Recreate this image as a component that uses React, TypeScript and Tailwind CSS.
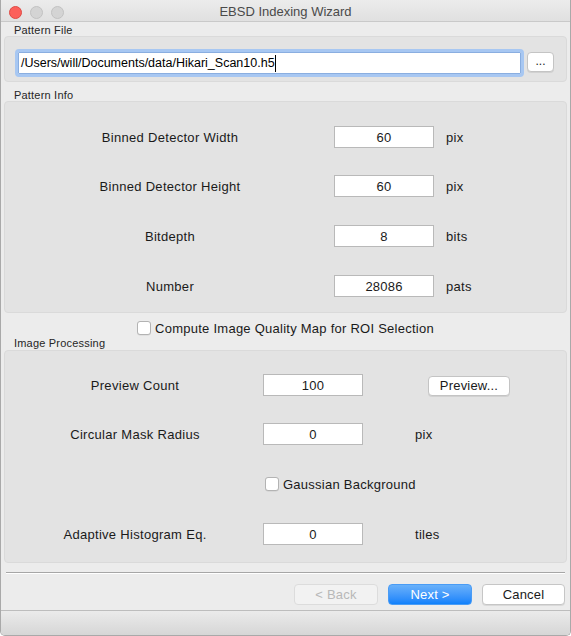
import React from "react";

const font = { fontFamily: '"Liberation Sans", Arial, sans-serif' };

function Field({ value }: { value: string }) {
  return (
    <div className="w-[100px] h-[22px] bg-white border border-[#b9b9b9] flex items-center justify-center pt-[1px] text-[13px] tracking-[0.2px] text-[#1a1a1a] shrink-0">
      {value}
    </div>
  );
}

function CheckBox() {
  return <div className="w-[14px] h-[14px] bg-white border border-[#b3b3b3] rounded-[3px] shrink-0 shadow-[0_0.5px_0_rgba(0,0,0,0.1)]" />;
}

export default function App() {
  const info = [
    { label: "Binned Detector Width", value: "60", unit: "pix", mt: "mt-[24px]" },
    { label: "Binned Detector Height", value: "60", unit: "pix", mt: "mt-[27px]" },
    { label: "Bitdepth", value: "8", unit: "bits", mt: "mt-[28px]" },
    { label: "Number", value: "28086", unit: "pats", mt: "mt-[28px]" },
  ];
  return (
    <div className="w-[571px] h-[636px] bg-[#ececec] flex flex-col border-x border-b border-[#a9a9a9] rounded-b-[5px] overflow-hidden text-[#1a1a1a]" style={font}>
      {/* Title bar */}
      <div className="relative h-[22px] shrink-0 bg-gradient-to-b from-[#ececec] to-[#e0e0e0] border-b border-[#c9c9c9] flex items-center justify-center pt-[3px]">
        <div className="absolute left-[8px] top-[6px] flex gap-[8px]">
          <div className="w-[13px] h-[13px] rounded-full bg-[#fc605b] border border-[#de4a44]" />
          <div className="w-[13px] h-[13px] rounded-full bg-[#d4d4d4] border border-[#c2c2c2]" />
          <div className="w-[13px] h-[13px] rounded-full bg-[#d4d4d4] border border-[#c2c2c2]" />
        </div>
        <span className="text-[13px] text-[#4a4a4a]">EBSD Indexing Wizard</span>
      </div>

      {/* Pattern File */}
      <div className="h-[14px] pl-[13px] pt-[2px] flex items-center text-[11px] tracking-[0.2px] text-[#262626] shrink-0">Pattern File</div>
      <div className="mx-[3px] h-[46px] shrink-0 bg-[#e3e3e3] border border-[#dadada] rounded-[4px] flex items-start pt-[15px] pl-[13px]">
        <div className="w-[503px] h-[22px] bg-white border border-[#8aaee0] outline outline-[3px] outline-[#a7c7f2] rounded-[1px] flex items-center pl-[2px] text-[12.5px] text-black">
          /Users/will/Documents/data/Hikari_Scan10.h5<span className="inline-block w-[1px] h-[17px] bg-black" />
        </div>
        <div className="ml-[6px] w-[27px] h-[20px] bg-white border border-[#c4c4c4] rounded-[4px] shadow-[0_1px_0_rgba(0,0,0,0.08)] flex items-center justify-center text-[12px] leading-none pb-[3px]">
          ...
        </div>
      </div>

      {/* Pattern Info */}
      <div className="h-[19px] pl-[13px] pt-[8px] flex items-center text-[11px] tracking-[0.2px] text-[#262626] shrink-0">Pattern Info</div>
      <div className="mx-[3px] h-[212px] shrink-0 bg-[#e3e3e3] border border-[#dadada] rounded-[4px] flex flex-col">
        {info.map((r) => (
          <div key={r.label} className={`flex items-center h-[22px] ${r.mt}`}>
            <div className="ml-[55px] w-[220px] pt-[2px] text-center text-[13px] tracking-[0.3px]">{r.label}</div>
            <div className="ml-[54px]"><Field value={r.value} /></div>
            <div className="ml-[12px] pt-[2px] text-[13px] tracking-[0.3px]">{r.unit}</div>
          </div>
        ))}
      </div>

      {/* Checkbox */}
      <div className="mt-[8px] h-[14px] flex items-center justify-center gap-[4px] shrink-0">
        <CheckBox />
        <span className="text-[13px] tracking-[0.25px] pt-[1px]">Compute Image Quality Map for ROI Selection</span>
      </div>

      {/* Image Processing */}
      <div className="h-[15px] pl-[13px] pt-[2px] flex items-center text-[11px] tracking-[0.2px] text-[#262626] shrink-0">Image Processing</div>
      <div className="mx-[3px] h-[213px] shrink-0 bg-[#e3e3e3] border border-[#dadada] rounded-[4px] flex flex-col">
        <div className="flex items-center h-[22px] mt-[23px]">
          <div className="ml-[25px] w-[210px] pt-[2px] text-center text-[13px] tracking-[0.3px]">Preview Count</div>
          <div className="ml-[23px]"><Field value="100" /></div>
          <div className="ml-[65px] mt-[2px] w-[82px] h-[20px] bg-white border border-[#c4c4c4] rounded-[4px] shadow-[0_1px_0_rgba(0,0,0,0.08)] flex items-center justify-center text-[13px] tracking-[0.2px]">
            Preview...
          </div>
        </div>
        <div className="flex items-center h-[22px] mt-[27px]">
          <div className="ml-[25px] w-[210px] pt-[2px] text-center text-[13px] tracking-[0.3px]">Circular Mask Radius</div>
          <div className="ml-[23px]"><Field value="0" /></div>
          <div className="ml-[52px] pt-[2px] text-[13px] tracking-[0.3px]">pix</div>
        </div>
        <div className="flex items-center h-[22px] mt-[28px]">
          <div className="ml-[260px] flex items-center gap-[4px]">
            <CheckBox />
            <span className="text-[13px] tracking-[0.25px] pt-[1px]">Gaussian Background</span>
          </div>
        </div>
        <div className="flex items-center h-[22px] mt-[28px]">
          <div className="ml-[25px] w-[210px] pt-[2px] text-center text-[13px] tracking-[0.3px]">Adaptive Histogram Eq.</div>
          <div className="ml-[23px]"><Field value="0" /></div>
          <div className="ml-[52px] pt-[2px] text-[13px] tracking-[0.3px]">tiles</div>
        </div>
      </div>

      {/* Separator */}
      <div className="mt-[9px] mx-[5px] h-[2px] shrink-0 border-t border-[#a6a6a6] border-b border-b-white" />

      {/* Buttons */}
      <div className="mt-[10px] h-[21px] flex justify-end gap-[10px] mr-[5px] shrink-0">
        <div className="w-[84px] h-[21px] bg-[#f2f2f2] border border-[#dcdcdc] rounded-[4px] flex items-center justify-center text-[13px] tracking-[0.2px] text-[#b8b8b8]">
          &lt; Back
        </div>
        <div className="w-[84px] h-[21px] bg-gradient-to-b from-[#69b1fa] to-[#0d81fb] border border-[#4a9cf5] rounded-[4px] flex items-center justify-center text-[13px] tracking-[0.2px] text-white">
          Next &gt;
        </div>
        <div className="w-[83px] h-[21px] bg-white border border-[#c6c6c6] rounded-[4px] shadow-[0_1px_0_rgba(0,0,0,0.08)] flex items-center justify-center text-[13px] tracking-[0.2px]">
          Cancel
        </div>
      </div>

      {/* Bottom bar */}
      <div className="mt-auto h-[25px] shrink-0 border-t border-[#bdbdbd] bg-gradient-to-b from-[#ebebeb] to-[#d6d6d6]" />
    </div>
  );
}
